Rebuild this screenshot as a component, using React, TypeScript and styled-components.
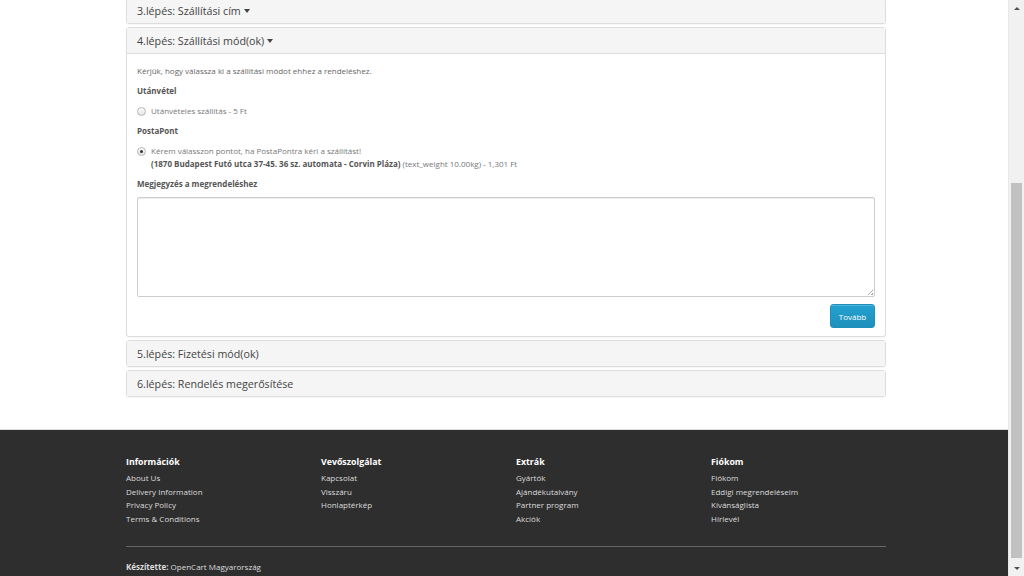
import React from "react";
import styled, { createGlobalStyle } from "styled-components";

const GlobalStyle = createGlobalStyle`
  html, body {
    margin: 0;
    padding: 0;
    overflow: hidden;
  }
  body {
    font-family: "Open Sans", "DejaVu Sans", sans-serif;
    color: #666;
    background: #fff;
  }
`;

const StyledPage = styled.div`
  display: flex;
  width: 1024px;
  height: 576px;
  overflow: hidden;
`;

const StyledMain = styled.div`
  flex: 1;
  display: flex;
  flex-direction: column;
  min-width: 0;
`;

const StyledCheckout = styled.div`
  width: 760px;
  margin: -3px 0 0 126px;
  padding-bottom: 29px;
`;

const StyledPanel = styled.div`
  border: 1px solid #ddd;
  border-radius: 3px;
  margin-bottom: 3px;
  background: #fff;
  box-shadow: 0 1px 1px rgba(0, 0, 0, 0.04);
`;

const StyledPanelHeading = styled.div<{ $open?: boolean }>`
  display: flex;
  align-items: center;
  height: 25px;
  padding: 0 10px;
  background: #f5f5f5;
  border-bottom: ${({ $open }) => ($open ? "1px solid #ddd" : "none")};
  font-size: 10.7px;
  color: #444;
`;

const StyledCaret = styled.span`
  display: inline-block;
  margin-left: 3px;
  margin-top: 1px;
  border-top: 4px solid #444;
  border-left: 3px solid transparent;
  border-right: 3px solid transparent;
`;

const StyledPanelBody = styled.div`
  padding: 10px 10px 8px;
  font-size: 8px;
  line-height: 13px;
`;

const StyledText = styled.p`
  margin: 0 0 7px;
`;

const StyledLabel = styled.div`
  margin: 0 0 7px;
  font-weight: 700;
  color: #555;
`;

const StyledRadioRow = styled.label`
  display: flex;
  align-items: flex-start;
  margin-bottom: 7px;
  color: #777;
`;

const StyledRadio = styled.span<{ $checked?: boolean }>`
  flex: none;
  position: relative;
  width: 7px;
  height: 7px;
  margin: 2.5px 5px 0 0;
  border-radius: 50%;
  border: 1px solid #b5b5b5;
  background: linear-gradient(#fdfdfd, #e4e4e4);
  &::after {
    content: "";
    display: ${({ $checked }) => ($checked ? "block" : "none")};
    position: absolute;
    left: 2px;
    top: 2px;
    width: 3px;
    height: 3px;
    border-radius: 50%;
    background: #333;
  }
`;

const StyledStrong = styled.strong`
  color: #555;
`;

const StyledTextarea = styled.div`
  position: relative;
  height: 98px;
  border: 1px solid #ccc;
  border-radius: 2px;
  box-shadow: inset 0 1px 1px rgba(0, 0, 0, 0.075);
  margin-bottom: 7px;
  &::after {
    content: "";
    position: absolute;
    right: 1px;
    bottom: 1px;
    width: 5px;
    height: 5px;
    background: linear-gradient(135deg, transparent 45%, #aaa 45%, #aaa 55%, transparent 55%, transparent 75%, #aaa 75%);
  }
`;

const StyledActions = styled.div`
  display: flex;
  justify-content: flex-end;
`;

const StyledButton = styled.button`
  height: 24px;
  width: 45px;
  padding: 0;
  border: 1px solid #1f90bb;
  border-radius: 3px;
  background: linear-gradient(#23a1d1, #1f90bb);
  color: #fff;
  font-family: "Open Sans", sans-serif;
  font-size: 8px;
  box-shadow: inset 0 1px 0 rgba(255, 255, 255, 0.2);
`;

const StyledFooter = styled.footer`
  flex: 1;
  background: #2e2e2e;
  border-top: 1px solid #ddd;
  padding: 25px 0 0 126px;
  color: #dcdcdc;
`;

const StyledFooterInner = styled.div`
  width: 760px;
`;

const StyledFooterGrid = styled.div`
  display: grid;
  grid-template-columns: 195px 195px 195px 1fr;
`;

const StyledFooterHeading = styled.h5`
  margin: 0 0 2px;
  font-size: 8.8px;
  line-height: 14px;
  font-weight: 700;
  color: #fff;
`;

const StyledFooterList = styled.ul`
  list-style: none;
  margin: 0;
  padding: 0;
  font-size: 8px;
  line-height: 13.5px;
`;

const StyledFooterRule = styled.hr`
  margin: 21px 0 13px;
  border: none;
  border-top: 1px solid #666;
`;

const StyledCopyright = styled.p`
  margin: 0;
  font-size: 8px;
  line-height: 13px;
  strong {
    font-weight: 700;
  }
`;

const StyledScrollbar = styled.div`
  width: 16px;
  flex: none;
  display: flex;
  flex-direction: column;
  background: #f1f1f1;
  border-left: 1px solid #e8e8e8;
  box-sizing: border-box;
`;

const StyledArrow = styled.div<{ $down?: boolean }>`
  height: 16px;
  display: flex;
  align-items: center;
  justify-content: center;
  &::before {
    content: "";
    border-left: 3px solid transparent;
    border-right: 3px solid transparent;
    ${({ $down }) => ($down ? "border-top: 3px solid #505050;" : "border-bottom: 3px solid #505050;")}
  }
`;

const StyledTrack = styled.div`
  flex: 1;
  display: flex;
  flex-direction: column;
  padding: 167px 2px 2px 2px;
`;

const StyledThumb = styled.div`
  flex: 1;
  background: #c1c1c1;
`;

const footerColumns = [
  { title: "Információk", links: ["About Us", "Delivery Information", "Privacy Policy", "Terms & Conditions"] },
  { title: "Vevőszolgálat", links: ["Kapcsolat", "Visszáru", "Honlaptérkép"] },
  { title: "Extrák", links: ["Gyártók", "Ajándékutalvány", "Partner program", "Akciók"] },
  { title: "Fiókom", links: ["Fiókom", "Eddigi megrendeléseim", "Kívánságlista", "Hírlevél"] },
];

export default function App() {
  return (
    <StyledPage>
      <GlobalStyle />
      <StyledMain>
        <StyledCheckout>
          <StyledPanel>
            <StyledPanelHeading>
              3.lépés: Szállítási cím <StyledCaret />
            </StyledPanelHeading>
          </StyledPanel>
          <StyledPanel>
            <StyledPanelHeading $open>
              4.lépés: Szállítási mód(ok) <StyledCaret />
            </StyledPanelHeading>
            <StyledPanelBody>
              <StyledText>Kérjük, hogy válassza ki a szállítási módot ehhez a rendeléshez.</StyledText>
              <StyledLabel>Utánvétel</StyledLabel>
              <StyledRadioRow>
                <StyledRadio />
                <span>Utánvételes szállítás - 5 Ft</span>
              </StyledRadioRow>
              <StyledLabel>PostaPont</StyledLabel>
              <StyledRadioRow>
                <StyledRadio $checked />
                <span>
                  Kérem válasszon pontot, ha PostaPontra kéri a szállítást!
                  <br />
                  <StyledStrong>(1870 Budapest Futó utca 37-45. 36 sz. automata - Corvin Pláza)</StyledStrong>{" "}
                  (text_weight 10.00kg) - 1,301 Ft
                </span>
              </StyledRadioRow>
              <StyledLabel>Megjegyzés a megrendeléshez</StyledLabel>
              <StyledTextarea />
              <StyledActions>
                <StyledButton>Tovább</StyledButton>
              </StyledActions>
            </StyledPanelBody>
          </StyledPanel>
          <StyledPanel>
            <StyledPanelHeading>5.lépés: Fizetési mód(ok)</StyledPanelHeading>
          </StyledPanel>
          <StyledPanel>
            <StyledPanelHeading>6.lépés: Rendelés megerősítése</StyledPanelHeading>
          </StyledPanel>
        </StyledCheckout>
        <StyledFooter>
          <StyledFooterInner>
            <StyledFooterGrid>
              {footerColumns.map((col) => (
                <div key={col.title}>
                  <StyledFooterHeading>{col.title}</StyledFooterHeading>
                  <StyledFooterList>
                    {col.links.map((link) => (
                      <li key={link}>{link}</li>
                    ))}
                  </StyledFooterList>
                </div>
              ))}
            </StyledFooterGrid>
            <StyledFooterRule />
            <StyledCopyright>
              <strong>Készítette:</strong> OpenCart Magyarország
            </StyledCopyright>
          </StyledFooterInner>
        </StyledFooter>
      </StyledMain>
      <StyledScrollbar>
        <StyledArrow />
        <StyledTrack>
          <StyledThumb />
        </StyledTrack>
        <StyledArrow $down />
      </StyledScrollbar>
    </StyledPage>
  );
}
